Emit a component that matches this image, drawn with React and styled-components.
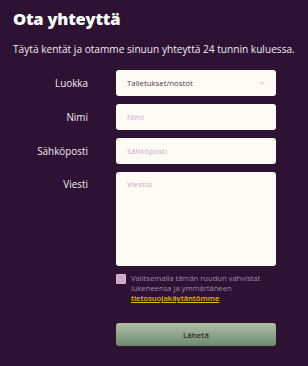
import React from "react";
import styled, { createGlobalStyle } from "styled-components";

const Global = createGlobalStyle`
  html, body { margin: 0; padding: 0; background: #2d1233; }
  body { font-family: "Open Sans", "DejaVu Sans", sans-serif; }
  * { box-sizing: border-box; }
`;

const Page = styled.div`
  width: 308px;
  height: 366px;
  background: #2d1233;
  padding: 8px 0 0 13px;
  color: #fff;
`;

const Title = styled.h1`
  margin: 0;
  font-family: "Open Sans", sans-serif;
  font-weight: 800;
  font-size: 16.5px;
  line-height: 22px;
  letter-spacing: -0.2px;
  color: #fff;
`;

const Lead = styled.p`
  margin: 12px 0 0;
  font-size: 10.15px;
  line-height: 14px;
  color: #f3eaf3;
`;

const Form = styled.form`
  display: grid;
  grid-template-columns: 75px 160px;
  column-gap: 28px;
  row-gap: 8px;
  margin-top: 14px;
`;

const Label = styled.label`
  text-align: right;
  font-size: 9.9px;
  font-weight: 500;
  line-height: 14px;
  padding-top: ${(p) => p.$top}px;
  color: #f3eaf3;
`;

const fieldBase = `
  width: 100%;
  background: #fffaf3;
  border: none;
  border-radius: 3px;
  font-family: "Open Sans", sans-serif;
  font-size: 7.8px;
  padding: 0 11px;
  outline: none;
`;

const SelectBox = styled.div`
  ${fieldBase}
  height: 26px;
  display: flex;
  align-items: center;
  justify-content: space-between;
  color: #4a3c4e;
`;

const Caret = styled.span`
  width: 0;
  height: 0;
  border-left: 3px solid transparent;
  border-right: 3px solid transparent;
  border-top: 3px solid #e6dbe6;
`;

const Input = styled.input`
  ${fieldBase}
  height: 26px;
  color: #4a3c4e;
  &::placeholder { color: #c7adc9; }
`;

const Area = styled.textarea`
  ${fieldBase}
  height: 94px;
  padding-top: 7px;
  resize: none;
  color: #4a3c4e;
  &::placeholder { color: #c7adc9; }
`;

const Spacer = styled.div``;

const Consent = styled.div`
  display: flex;
  gap: 5px;
  margin-top: -1px;
`;

const Box = styled.span`
  flex: none;
  width: 10px;
  height: 10px;
  margin-top: 1px;
  background: #c8a7c8;
  border: 1px solid #d8bcd8;
  border-radius: 1px;
`;

const ConsentText = styled.span`
  font-size: 7.6px;
  line-height: 10px;
  color: #a48aa9;
`;

const Link = styled.a`
  color: #e6bd00;
  text-decoration: underline;
  font-weight: 600;
`;

const Submit = styled.button`
  grid-column: 2;
  margin-top: 12px;
  height: 23px;
  border: none;
  border-radius: 3px;
  background: linear-gradient(#b1bea6, #6d8a70);
  font-family: "Open Sans", sans-serif;
  font-size: 7.8px;
  font-weight: 600;
  color: #2e2a30;
`;

export default function App() {
  return (
    <Page>
      <Global />
      <Title>Ota yhteyttä</Title>
      <Lead>Täytä kentät ja otamme sinuun yhteyttä 24 tunnin kuluessa.</Lead>
      <Form onSubmit={(e) => e.preventDefault()}>
        <Label $top={6}>Luokka</Label>
        <SelectBox>
          <span>Talletukset/nostot</span>
          <Caret />
        </SelectBox>
        <Label $top={6}>Nimi</Label>
        <Input placeholder="Nimi" />
        <Label $top={6}>Sähköposti</Label>
        <Input placeholder="Sähköposti" />
        <Label $top={5}>Viesti</Label>
        <Area placeholder="Viestisi" />
        <Spacer />
        <Consent>
          <Box />
          <ConsentText>
            Valitsemalla tämän ruudun vahvistat lukeneensa ja ymmärtäneen{" "}
            <Link href="#">tietosuojakäytäntömme</Link>
          </ConsentText>
        </Consent>
        <Submit type="submit">Lähetä</Submit>
      </Form>
    </Page>
  );
}
